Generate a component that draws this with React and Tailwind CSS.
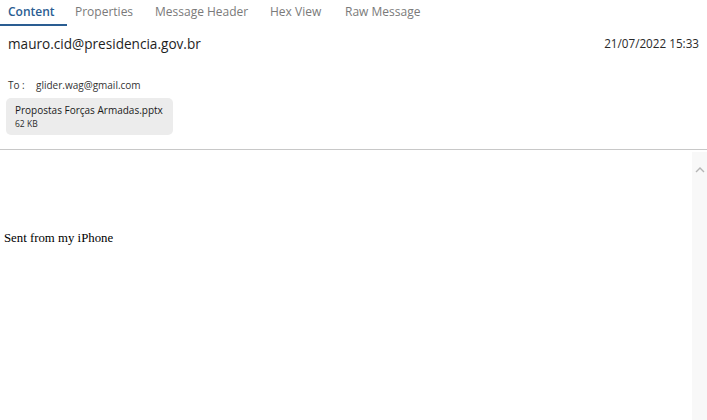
export default function App() {
  const tabs = [
    ["Content", "w-[67px]"],
    ["Properties", "w-[80px]"],
    ["Message Header", "w-[115px]"],
    ["Hex View", "w-[75px]"],
    ["Raw Message", "w-[90px]"],
  ];
  return (
    <div className="w-[707px] h-[420px] bg-white overflow-hidden flex flex-col" style={{ fontFamily: '"Open Sans", "Noto Sans", sans-serif' }}>
      <div className="flex h-[26px] shrink-0">
        {tabs.map(([t, w], i) => (
          <div
            key={t}
            className={
              w + " h-[26px] pl-[8px] text-[12px] leading-[24px] border-b-2 whitespace-nowrap " +
              (i === 0 ? "text-[#2a5d92] border-[#2a5d92] font-semibold" : "text-[#7a7a7a] border-transparent")
            }
          >
            {t}
          </div>
        ))}
      </div>
      <div className="flex justify-between items-start px-[8px] pt-[8px] shrink-0">
        <div className="text-[13.6px] text-[#1e1e1e] leading-[20px] font-medium">mauro.cid@presidencia.gov.br</div>
        <div className="text-[11.7px] text-[#2a2a2a] leading-[18px]">21/07/2022 15:33</div>
      </div>
      <div className="flex px-[8px] mt-[24px] text-[10px] text-[#333] leading-[14px] shrink-0">
        <span className="w-[28px]">To :</span>
        <span>glider.wag@gmail.com</span>
      </div>
      <div className="ml-[6px] mt-[6px] w-[167px] h-[37px] rounded-[5px] bg-[#ececec] px-[9px] pt-[5px] shrink-0 whitespace-nowrap">
        <div className="text-[10px] leading-[14px] text-[#1a1a1a] font-medium">Propostas Forças Armadas.pptx</div>
        <div className="text-[8.5px] leading-[13px] text-[#2a2a2a]">62 KB</div>
      </div>
      <div className="mt-[14px] h-px bg-[#c8c8c8] shrink-0" />
      <div className="flex flex-1 min-h-0">
        <div className="flex-1 pt-[79px] pl-[4px]">
          <div className="text-[12.8px] text-black leading-[18px]" style={{ fontFamily: '"Liberation Serif", serif' }}>Sent from my iPhone</div>
        </div>
        <div className="w-[15px] mt-[2px] bg-[#f8f8f8] flex justify-center pt-[14px]">
          <svg width="10" height="7" viewBox="0 0 10 7">
            <path d="M1 6 L5 2 L9 6" fill="none" stroke="#b5b5b5" strokeWidth="1.4" />
          </svg>
        </div>
      </div>
    </div>
  );
}
